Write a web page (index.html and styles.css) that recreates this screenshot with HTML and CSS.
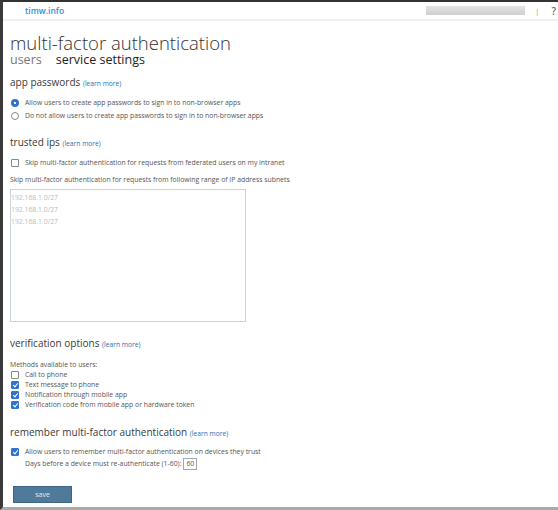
FILE: index.html
```html
<!DOCTYPE html>
<html lang="en">
<head>
    <meta charset="UTF-8">
    <title>multi-factor authentication</title>
    <link rel="stylesheet" href="styles.css">
</head>
<body>
    <div class="frame">
        <div class="topbar">
            <span class="tenant">timw.info</span>
            <span class="user"></span>
            <span class="sep">|</span>
            <span class="help">?</span>
        </div>
        <div class="page">
            <h1 class="title">multi-factor authentication</h1>
            <div class="tabs">
                <span class="tab">users</span>
                <span class="tab current">service settings</span>
            </div>

            <h2 class="head first">app passwords <a href="#" class="learn">(learn more)</a></h2>
            <ul class="opts">
                <li><span class="radio on"></span>Allow users to create app passwords to sign in to non-browser apps</li>
                <li><span class="radio"></span>Do not allow users to create app passwords to sign in to non-browser apps</li>
            </ul>

            <h2 class="head ips-head">trusted ips <a href="#" class="learn">(learn more)</a></h2>
            <ul class="opts">
                <li><span class="check"></span>Skip multi-factor authentication for requests from federated users on my intranet</li>
            </ul>
            <p class="note">Skip multi-factor authentication for requests from following range of IP address subnets</p>
            <div class="ips">
                <div>192.168.1.0/27</div>
                <div>192.168.1.0/27</div>
                <div>192.168.1.0/27</div>
            </div>

            <h2 class="head">verification options <a href="#" class="learn">(learn more)</a></h2>
            <p class="methods">Methods available to users:</p>
            <ul class="opts tight">
                <li><span class="check"></span>Call to phone</li>
                <li><span class="check on"></span>Text message to phone</li>
                <li><span class="check on"></span>Notification through mobile app</li>
                <li><span class="check on"></span>Verification code from mobile app or hardware token</li>
            </ul>

            <h2 class="head later">remember multi-factor authentication <a href="#" class="learn">(learn more)</a></h2>
            <ul class="opts remember">
                <li><span class="check on"></span>Allow users to remember multi-factor authentication on devices they trust</li>
                <li class="days">Days before a device must re-authenticate (1-60): <span class="num">60</span></li>
            </ul>

            <button class="save">save</button>
        </div>
    </div>
</body>
</html>
```
FILE: styles.css
```css
*{
    margin: 0;
    padding: 0;
    list-style: none;
    text-decoration: none;
    box-sizing: border-box;
}
html, body{
    overflow: hidden;
}
body{
    font-family: "Open Sans", "Noto Sans", sans-serif;
    background: #fff;
    color: #444;
}
.frame{
    width: 558px;
    height: 510px;
    border-top: 2px solid #333;
    border-left: 3px solid #3a3a3a;
    border-bottom: 3px solid #aaa;
    overflow: hidden;
}
.topbar{
    height: 19px;
    display: flex;
    align-items: center;
    border-bottom: 2px solid #f0f0f0;
    padding-left: 22px;
}
.tenant{
    color: #2d8fd5;
    font-size: 8.5px;
    font-weight: 600;
}
.user{
    width: 99px;
    height: 9px;
    margin-left: auto;
    background: linear-gradient(#e4e4e4, #cfcfcf);
}
.sep{
    color: #999;
    font-size: 8px;
    margin-left: 10px;
}
.help{
    color: #666;
    font-size: 10px;
    font-weight: 600;
    margin-left: 12px;
    margin-right: 2px;
}
.page{
    padding-left: 7px;
}
.title{
    font-size: 18.5px;
    font-weight: 300;
    color: #333;
    margin-top: 11px;
    line-height: 21px;
}
.tabs{
    font-size: 12.5px;
    line-height: 13px;
    display: flex;
    gap: 14px;
}
.tab{
    color: #777;
}
.tab.current{
    color: #222;
}
.head{
    font-size: 10px;
    font-weight: 400;
    color: #3a3a3a;
    margin-top: 13px;
    line-height: 16px;
}
.head.first{
    margin-top: 8px;
}
.head.ips-head{
    margin-top: 12px;
}
.head.later{
    margin-top: 14px;
}
.learn{
    font-size: 6.7px;
    color: #2a6fb0;
}
.opts{
    font-size: 6.85px;
    color: #555;
    margin-top: 4px;
    line-height: 13px;
}
.opts li{
    display: flex;
    align-items: center;
}
.opts.tight{
    margin-top: 0;
    line-height: 10px;
}
.opts.remember{
    margin-top: 4px;
    line-height: 12px;
}
.radio, .check{
    position: relative;
    width: 8px;
    height: 8px;
    border: 1px solid #888;
    background: #fff;
    margin-left: 1px;
    margin-right: 6px;
    flex: none;
}
.radio{
    border-radius: 50%;
}
.radio.on{
    border: 2px solid #2f74d0;
    background: radial-gradient(#fff 30%, #2f74d0 40%);
}
.check{
    border-radius: 1px;
}
.check.on{
    background: #2f74d0;
    border-color: #2f74d0;
}
.check.on::after{
    content: "";
    position: absolute;
    left: 2px;
    top: 0;
    width: 2px;
    height: 4px;
    border: solid #fff;
    border-width: 0 1px 1px 0;
    transform: rotate(40deg);
}
.note{
    font-size: 6.85px;
    color: #555;
    margin-top: 5px;
    line-height: 12px;
}
.ips{
    width: 236px;
    height: 133px;
    border: 1px solid #c9d4e0;
    margin-top: 3px;
    padding-top: 2px;
    font-size: 6.85px;
    line-height: 12px;
    color: #bbb;
}
.methods{
    font-size: 6.85px;
    color: #555;
    margin-top: 7px;
    line-height: 10px;
}
.days{
    padding-left: 15px;
}
.num{
    border: 1px solid #9ab;
    padding: 0 2px;
    margin-left: 2px;
    line-height: 10px;
}
.save{
    margin-top: 16px;
    margin-left: 3px;
    width: 59px;
    height: 17px;
    background: #4f7a99;
    border: 1px solid #3d6686;
    color: #e4ecf2;
    font-family: inherit;
    font-size: 7px;
}
```
